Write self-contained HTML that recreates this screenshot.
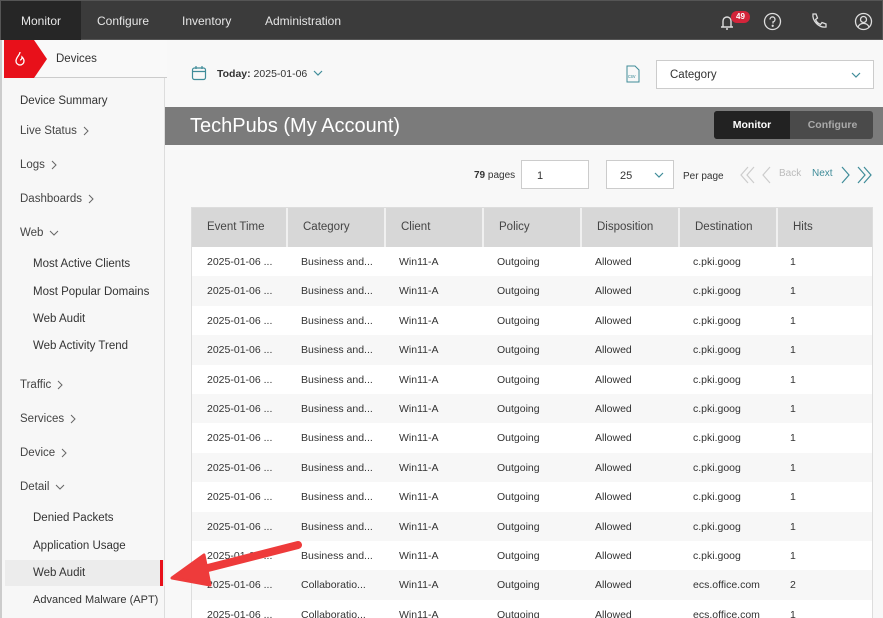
<!DOCTYPE html>
<html><head><meta charset="utf-8"><style>
*{box-sizing:border-box;margin:0;padding:0}
body{width:883px;height:618px;overflow:hidden;background:#f8f8f8;font-family:"Liberation Sans",sans-serif;font-size:11px;color:#333;position:relative}
.top{position:absolute;left:0;top:0;width:883px;height:40px;background:#3b3b3b;border:1px solid #555}
.top .t{position:absolute;top:0;height:40px;line-height:40px;color:#e6e6e6;font-size:12px}
.side{position:absolute;left:0;top:40px;width:165px;height:578px;background:#f7f7f7;border-right:1px solid #ddd;border-left:2px solid #ccc}
.side div{position:absolute;font-size:11.5px;color:#444;white-space:nowrap}
.dev{position:absolute;left:2px;top:0;width:163px;height:38px;border-bottom:1px solid #ccc;background:#f9f9f9}
.tbl{position:absolute;left:191px;top:207px;width:682px;height:411px;border:1px solid #ddd;border-bottom:none;background:#fff;overflow:hidden}
.row{position:absolute;left:0;width:680px;height:29.4px}
.row span{position:absolute;top:9px;font-size:10.5px;color:#333}
.hd{position:absolute;top:0;height:39px;background:#d7d7d7;border-right:2px solid #f0f0f0}
.hd span{position:absolute;left:15px;top:13px;font-size:11.5px;color:#444}
.chev{display:inline-block;vertical-align:middle;margin-left:6px}
</style></head><body>
<div class="top">
<div style="position:absolute;left:0;top:0;width:80px;height:39px;background:#262626"></div>
<span class="t" style="left:20px">Monitor</span>
<span class="t" style="left:96px">Configure</span>
<span class="t" style="left:181px">Inventory</span>
<span class="t" style="left:264px">Administration</span>
<svg style="position:absolute;left:716px;top:10px" width="22" height="22" viewBox="0 0 22 22" fill="none" stroke="#ddd" stroke-width="1.4"><path d="M4 16h12M6 16V10a4 4 0 0 1 8 0v6M9 18h2"/></svg>
<div style="position:absolute;left:730px;top:10px;width:19px;height:12px;border-radius:6px;background:#d3243a;color:#fff;font-size:8px;font-weight:bold;text-align:center;line-height:12px">49</div>
<svg style="position:absolute;left:762px;top:11px" width="19" height="19" viewBox="0 0 19 19" fill="none" stroke="#ddd" stroke-width="1.3"><circle cx="9.5" cy="9.5" r="8"/><path d="M7 7.5a2.5 2.5 0 1 1 3 2.4v1.6"/><circle cx="9.7" cy="13.8" r=".5" fill="#ddd"/></svg>
<svg style="position:absolute;left:809px;top:11px" width="18" height="18" viewBox="0 0 18 18" fill="none" stroke="#ddd" stroke-width="1.3"><path d="M3 2l3 0 1.5 4-2 1.5a9 9 0 0 0 5 5l1.5-2 4 1.5v3c-7 1-14-6-13-13z"/></svg>
<svg style="position:absolute;left:853px;top:11px" width="19" height="19" viewBox="0 0 19 19" fill="none" stroke="#ddd" stroke-width="1.3"><circle cx="9.5" cy="9.5" r="8"/><circle cx="9.5" cy="7.5" r="3"/><path d="M4 15a6 6 0 0 1 11 0"/></svg>
</div>
<div class="side">
<div class="dev"><div style="position:absolute;left:0;top:0;width:30px;height:38px;background:#e8101a"></div><div style="position:absolute;left:30px;top:0;width:0;height:0;border-top:19px solid transparent;border-bottom:19px solid transparent;border-left:13px solid #e8101a"></div>
<svg style="position:absolute;left:9px;top:11px" width="14" height="16" viewBox="0 0 14 16" fill="none" stroke="#fff" stroke-width="1.3"><path d="M7 1c0 3-4 5-4 9a4 4 0 0 0 8 0c0-2-1-3-2-4 0 2-1 3-2 3"/></svg>
<span style="position:absolute;left:52px;top:13px;font-size:11.5px;color:#333">Devices</span></div>
<div style="left:18px;top:55px;color:#333">Device Summary</div>
<div style="left:18px;top:85px">Live Status<svg class="chev" width="6" height="10"><path d="M1 1l4 4-4 4" fill="none" stroke="#666"/></svg></div>
<div style="left:18px;top:119px">Logs<svg class="chev" width="6" height="10"><path d="M1 1l4 4-4 4" fill="none" stroke="#666"/></svg></div>
<div style="left:18px;top:153px">Dashboards<svg class="chev" width="6" height="10"><path d="M1 1l4 4-4 4" fill="none" stroke="#666"/></svg></div>
<div style="left:18px;top:187px">Web<svg class="chev" width="10" height="6"><path d="M1 1l4 4 4-4" fill="none" stroke="#666"/></svg></div>
<div style="left:31px;top:218px;color:#333">Most Active Clients</div>
<div style="left:31px;top:246px;color:#333">Most Popular Domains</div>
<div style="left:31px;top:273px;color:#333">Web Audit</div>
<div style="left:31px;top:300px;color:#333">Web Activity Trend</div>
<div style="left:18px;top:339px">Traffic<svg class="chev" width="6" height="10"><path d="M1 1l4 4-4 4" fill="none" stroke="#666"/></svg></div>
<div style="left:18px;top:373px">Services<svg class="chev" width="6" height="10"><path d="M1 1l4 4-4 4" fill="none" stroke="#666"/></svg></div>
<div style="left:18px;top:407px">Device<svg class="chev" width="6" height="10"><path d="M1 1l4 4-4 4" fill="none" stroke="#666"/></svg></div>
<div style="left:18px;top:441px">Detail<svg class="chev" width="10" height="6"><path d="M1 1l4 4 4-4" fill="none" stroke="#666"/></svg></div>
<div style="left:31px;top:472px;color:#333">Denied Packets</div>
<div style="left:31px;top:500px;color:#333">Application Usage</div>
<div style="left:3px;top:520px;width:160px;height:26px;background:#ececec"></div>
<div style="left:158px;top:520px;width:3px;height:26px;background:#e8101a"></div>
<div style="left:31px;top:527px;color:#333">Web Audit</div>
<div style="left:31px;top:554px;color:#333;font-size:11px">Advanced Malware (APT)</div>
</div>
<svg style="position:absolute;left:191px;top:65px" width="16" height="16" viewBox="0 0 16 16" fill="none" stroke="#3f8c99" stroke-width="1.2"><rect x="1.5" y="3" width="13" height="11.5" rx="2"/><path d="M1.5 6.5h13M5 1v3M11 1v3"/></svg>
<div style="position:absolute;left:217px;top:68px;font-size:10.5px"><b>Today:</b> 2025-01-06</div>
<svg style="position:absolute;left:313px;top:70px" width="10" height="6"><path d="M1 1l4 4 4-4" fill="none" stroke="#3f8c99" stroke-width="1.2"/></svg>
<svg style="position:absolute;left:625px;top:65px" width="16" height="18" viewBox="0 0 16 18" fill="none" stroke="#3f8c99" stroke-width="1"><path d="M2 1h8l4 4v12H2z"/><text x="3" y="13" font-size="5" fill="#3f8c99" stroke="none" font-family="Liberation Sans">csv</text></svg>
<div style="position:absolute;left:656px;top:60px;width:218px;height:29px;border:1px solid #ccc;background:#fff"><span style="position:absolute;left:13px;top:8px;font-size:11.5px">Category</span><svg style="position:absolute;right:12px;top:11px" width="10" height="6"><path d="M1 1l4 4 4-4" fill="none" stroke="#3f8c99" stroke-width="1.2"/></svg></div>
<div style="position:absolute;left:165px;top:107px;width:718px;height:38px;background:#7b7b7b"><span style="position:absolute;left:25px;top:8px;font-size:20px;color:#fff">TechPubs (My Account)</span>
<div style="position:absolute;left:549px;top:4px;width:159px;height:28px;border-radius:3px;background:#4a4a4a"></div>
<div style="position:absolute;left:549px;top:4px;width:76px;height:28px;border-radius:3px 0 0 3px;background:#222;color:#fff;font-weight:bold;text-align:center;line-height:28px;font-size:10.5px">Monitor</div>
<div style="position:absolute;left:627px;top:4px;width:81px;height:28px;color:#aaa;font-weight:bold;text-align:center;line-height:28px;font-size:10.5px">Configure</div></div>
<div style="position:absolute;left:474px;top:170px;font-size:10px"><b>79</b> pages</div>
<div style="position:absolute;left:521px;top:160px;width:68px;height:29px;border:1px solid #ccc;background:#fff"><span style="position:absolute;left:15px;top:9px;font-size:11px">1</span></div>
<div style="position:absolute;left:606px;top:160px;width:68px;height:29px;border:1px solid #ccc;background:#fff"><span style="position:absolute;left:13px;top:9px;font-size:11px">25</span><svg style="position:absolute;left:47px;top:11px" width="10" height="6"><path d="M1 1l4 4 4-4" fill="none" stroke="#3f8c99" stroke-width="1.2"/></svg></div>
<div style="position:absolute;left:683px;top:171px;font-size:10px">Per page</div>
<svg style="position:absolute;left:740px;top:166px" width="36" height="18" fill="none" stroke="#ccc" stroke-width="1.2"><path d="M8 1L1 9l7 8M14 1L7 9l7 8M30 1l-7 8 7 8"/></svg>
<div style="position:absolute;left:779px;top:168px;font-size:10px;color:#bbb">Back</div>
<div style="position:absolute;left:812px;top:168px;font-size:10px;color:#3f8c99">Next</div>
<svg style="position:absolute;left:840px;top:166px" width="34" height="18" fill="none" stroke="#3f8c99" stroke-width="1.2"><path d="M2 1l7 8-7 8M18 1l7 8-7 8M24 1l7 8-7 8"/></svg>
<div class="tbl">
<div class="hd" style="left:0;width:96px"><span>Event Time</span></div>
<div class="hd" style="left:96px;width:98px"><span>Category</span></div>
<div class="hd" style="left:194px;width:98px"><span>Client</span></div>
<div class="hd" style="left:292px;width:98px"><span>Policy</span></div>
<div class="hd" style="left:390px;width:98px"><span>Disposition</span></div>
<div class="hd" style="left:488px;width:98px"><span>Destination</span></div>
<div class="hd" style="left:586px;width:96px;border-right:none"><span>Hits</span></div>
<div id="rows"></div>
</div>
<script>
var h='';
for(var i=0;i<13;i++){var c=i<11?'Business and...':'Collaboratio...',ds=i<11?'c.pki.goog':'ecs.office.com',n=i==11?'2':'1';
h+='<div class="row" style="top:'+(39+i*29.4)+'px;background:'+(i%2?'#f7f7f7':'#fff')+'"><span style="left:15px">2025-01-06 ...</span><span style="left:109px">'+c+'</span><span style="left:207px">Win11-A</span><span style="left:305px">Outgoing</span><span style="left:403px">Allowed</span><span style="left:501px">'+ds+'</span><span style="left:598px">'+n+'</span></div>';}
document.getElementById('rows').innerHTML=h;
</script>
<svg style="position:absolute;left:160px;top:535px" width="160" height="60" viewBox="0 0 160 60"><path d="M138 10 L40 35" stroke="#ee3b3b" stroke-width="8" stroke-linecap="round"/><path d="M12 43 L44 20 L50 50 Z" fill="#ee3b3b" stroke="#ee3b3b" stroke-width="3" stroke-linejoin="round"/></svg>
</body></html>
